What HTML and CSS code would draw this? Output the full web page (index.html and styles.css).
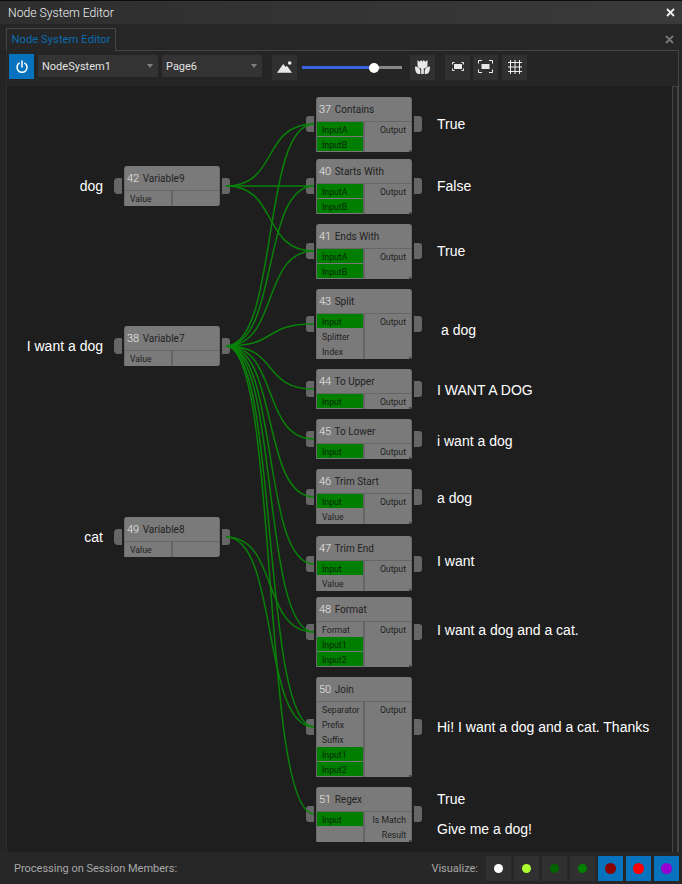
FILE: index.html
```html
<!DOCTYPE html>
<html lang="en">
<head>
<meta charset="utf-8">
<title>Node System Editor</title>
<link rel="stylesheet" href="styles.css">
</head>
<body>
<div class="window">
  <header class="titlebar">
    <span>Node System Editor</span>
    <svg class="close" viewBox="0 0 9 9"><path d="M1 1 8 8M8 1 1 8"/></svg>
  </header>
  <div class="tabstrip">
    <div class="tab">Node System Editor</div>
    <svg class="close dim" viewBox="0 0 9 9"><path d="M1 1 8 8M8 1 1 8"/></svg>
  </div>
  <div class="panel">
    <div class="toolbar">
      <button class="tool power"><svg viewBox="0 0 14 14"><path d="M4.2 3.2a5 5 0 1 0 5.6 0M7 1v6"/></svg></button>
      <div class="combo c1"><span>NodeSystem1</span><i></i></div>
      <div class="combo c2"><span>Page6</span><i></i></div>
      <button class="tool t-image"><svg viewBox="0 0 15 12"><circle cx="12.700" cy="2" r="1.800" class="fill"/><path class="fill" d="M0 11.700 6.200 3l2.400 3 1.300-1.200 5.100 6.900z"/></svg></button>
      <div class="slider"><div class="slider-fill"></div><div class="thumb"></div></div>
      <button class="tool t-flower"><svg viewBox="0 0 15 15"><path class="fill" d="M2.500 0l2.200 1.700L6.200 0l1.300 1.700L8.800 0l1.500 1.700L12.500 0v5.200c0 2-1.700 3-3.700 3.200V14H6.200V8.400c-2-.2-3.700-1.200-3.700-3.200zM0 6.600c2.800 0 5 1.800 5.300 4V14H3.500C1.200 14 0 11 0 6.600zM15 6.600c-2.800 0-5 1.800-5.300 4V14h1.800c2.300 0 3.500-3 3.500-7.400z"/></svg></button>
      <button class="tool t-fit"><svg viewBox="0 0 12 9"><path class="line" d="M.5 2.500V.5h2M9.500 .5h2v2M.5 6.500v2h2M9.500 8.500h2v-2"/><rect class="fill" x="2" y="2" width="8" height="5"/></svg></button>
      <button class="tool t-full"><svg viewBox="0 0 15 13"><path class="line" d="M.5 3.500V.5h3.500M11 .5h3.500v3M.5 9.500v3h3.500M11 12.500h3.500v-3"/><rect class="fill" x="3.500" y="4" width="8" height="5"/></svg></button>
      <button class="tool t-grid"><svg viewBox="0 0 14 14"><path class="line" d="M2.500 0v14M7 0v14M11.500 0v14M0 2.500h14M0 7h14M0 11.500h14"/></svg></button>
    </div>
    <div class="content">
      <main class="canvas">
        <div class="label left l-dog">dog</div>
        <div class="label left l-want">I want a dog</div>
        <div class="label left l-cat">cat</div>

        <div class="node var n42"><div class="port in p12"></div><div class="body"><div class="head"><b>42</b> Variable9</div><div class="rows"><div class="col"><div class="row">Value</div></div><div class="col r"></div></div></div><div class="port out p12"></div></div>
        <div class="node var n38"><div class="port in p12"></div><div class="body"><div class="head"><b>38</b> Variable7</div><div class="rows"><div class="col"><div class="row">Value</div></div><div class="col r"></div></div></div><div class="port out p12"></div></div>
        <div class="node var n49"><div class="port in p12"></div><div class="body"><div class="head"><b>49</b> Variable8</div><div class="rows"><div class="col"><div class="row">Value</div></div><div class="col r"></div></div></div><div class="port out p12"></div></div>

        <div class="node op n37"><div class="port in p19"></div><div class="body"><div class="head"><b>37</b> Contains</div><div class="rows"><div class="col"><div class="row on">InputA</div><div class="row on">InputB</div></div><div class="col r"><div class="row">Output</div></div></div></div><div class="port out p19"></div></div>
        <div class="node op n40"><div class="port in p19"></div><div class="body"><div class="head"><b>40</b> Starts With</div><div class="rows"><div class="col"><div class="row on">InputA</div><div class="row on">InputB</div></div><div class="col r"><div class="row">Output</div></div></div></div><div class="port out p19"></div></div>
        <div class="node op n41"><div class="port in p19"></div><div class="body"><div class="head"><b>41</b> Ends With</div><div class="rows"><div class="col"><div class="row on">InputA</div><div class="row on">InputB</div></div><div class="col r"><div class="row">Output</div></div></div></div><div class="port out p19"></div></div>
        <div class="node op n43"><div class="port in p27"></div><div class="body"><div class="head"><b>43</b> Split</div><div class="rows"><div class="col"><div class="row on">Input</div><div class="row">Splitter</div><div class="row">Index</div></div><div class="col r"><div class="row">Output</div></div></div></div><div class="port out p27"></div></div>
        <div class="node op n44"><div class="port in p12"></div><div class="body"><div class="head"><b>44</b> To Upper</div><div class="rows"><div class="col"><div class="row on">Input</div></div><div class="col r"><div class="row">Output</div></div></div></div><div class="port out p12"></div></div>
        <div class="node op n45"><div class="port in p12"></div><div class="body"><div class="head"><b>45</b> To Lower</div><div class="rows"><div class="col"><div class="row on">Input</div></div><div class="col r"><div class="row">Output</div></div></div></div><div class="port out p12"></div></div>
        <div class="node op n46"><div class="port in p20"></div><div class="body"><div class="head"><b>46</b> Trim Start</div><div class="rows"><div class="col"><div class="row on">Input</div><div class="row">Value</div></div><div class="col r"><div class="row">Output</div></div></div></div><div class="port out p20"></div></div>
        <div class="node op n47"><div class="port in p20"></div><div class="body"><div class="head"><b>47</b> Trim End</div><div class="rows"><div class="col"><div class="row on">Input</div><div class="row">Value</div></div><div class="col r"><div class="row">Output</div></div></div></div><div class="port out p20"></div></div>
        <div class="node op n48"><div class="port in p27"></div><div class="body"><div class="head"><b>48</b> Format</div><div class="rows"><div class="col"><div class="row">Format</div><div class="row on">Input1</div><div class="row on">Input2</div></div><div class="col r"><div class="row">Output</div></div></div></div><div class="port out p27"></div></div>
        <div class="node op n50"><div class="port in p42"></div><div class="body"><div class="head"><b>50</b> Join</div><div class="rows"><div class="col"><div class="row">Separator</div><div class="row">Prefix</div><div class="row">Suffix</div><div class="row on">Input1</div><div class="row on">Input2</div></div><div class="col r"><div class="row">Output</div></div></div></div><div class="port out p42"></div></div>
        <div class="node op n51"><div class="port in p19"></div><div class="body"><div class="head"><b>51</b> Regex</div><div class="rows"><div class="col"><div class="row on">Input</div></div><div class="col r"><div class="row">Is Match</div><div class="row">Result</div></div></div></div><div class="port out p19"></div></div>

        <svg class="wires" viewBox="7 86 665 766">
          <path d="M226 186C279 186 261 124 314 124"/>
          <path d="M226 186H314"/>
          <path d="M226 186C279 186 261 251 314 251"/>
          <path d="M226 346C279 346 261 124 314 124"/>
          <path d="M226 346C279 346 261 186 314 186"/>
          <path d="M226 346C279 346 261 251 314 251"/>
          <path d="M226 346C279 346 261 324 314 324"/>
          <path d="M226 346C279 346 261 389 314 389"/>
          <path d="M226 346C279 346 261 439 314 439"/>
          <path d="M226 346C279 346 261 497 314 497"/>
          <path d="M226 346C279 346 261 564 314 564"/>
          <path d="M226 346C279 346 261 632 314 632"/>
          <path d="M226 346C279 346 261 727 314 727"/>
          <path d="M226 346C279 346 261 814 314 814"/>
          <path d="M226 537C279 537 261 632 314 632"/>
          <path d="M226 537C279 537 261 727 314 727"/>
        </svg>

        <div class="label right v1">True</div>
        <div class="label right v2">False</div>
        <div class="label right v3">True</div>
        <div class="label right v4">a dog</div>
        <div class="label right v5">I WANT A DOG</div>
        <div class="label right v6">i want a dog</div>
        <div class="label right v7">a dog</div>
        <div class="label right v8">I want</div>
        <div class="label right v9">I want a dog and a cat.</div>
        <div class="label right v10">Hi! I want a dog and a cat. Thanks</div>
        <div class="label right v11">True</div>
        <div class="label right v12">Give me a dog!</div>
      </main>
      <div class="scrollbar"></div>
    </div>
  </div>
  <footer class="status">
    <span class="processing">Processing on Session Members:</span>
    <span class="visualize">Visualize:</span>
    <div class="vis-buttons">
      <button class="vis"><i class="dot white"></i></button>
      <button class="vis"><i class="dot lime"></i></button>
      <button class="vis"><i class="dot dgreen"></i></button>
      <button class="vis"><i class="dot green"></i></button>
      <button class="vis active"><i class="dot dred"></i></button>
      <button class="vis active"><i class="dot red"></i></button>
      <button class="vis active"><i class="dot violet"></i></button>
    </div>
  </footer>
</div>
</body>
</html>
```
FILE: styles.css
```css
* { box-sizing: border-box; }
html, body { margin: 0; padding: 0; background: #252525; }
body { font-family: "Roboto", "Liberation Sans", sans-serif; color: #ddd; }
button { border: 0; padding: 0; margin: 0; font: inherit; }
.window { width: 682px; height: 884px; display: flex; flex-direction: column; overflow: hidden; border-top: 1px solid #0c0c0c; }

.titlebar { height: 23px; flex: none; display: flex; align-items: center; justify-content: space-between; padding: 0 7px 0 8px; background: linear-gradient(90deg, #2e2e2e, #3a3a3a); font-size: 12.2px; font-weight: 300; color: #f0f0f0; }
.close { width: 9px; height: 9px; fill: none; stroke: #f2f2f2; stroke-width: 1.8; }
.close.dim { stroke: #777; margin-right: 3px; }

.tabstrip { height: 26px; flex: none; display: flex; align-items: flex-end; justify-content: space-between; padding-left: 6px; padding-right: 5px; background: #262626; }
.tabstrip .close { align-self: center; margin-top: 4px; }
.tab { width: 110px; height: 23px; border: 1px solid #454545; border-bottom: 0; color: #0a6cb0; font-size: 11.300px; line-height: 21px; text-align: center; background: #262626; position: relative; top: 1px; }

.panel { flex: 1; min-height: 0; display: flex; flex-direction: column; margin-right: 3px; margin-left: 6px; border-top: 1px solid #454545; border-right: 1px solid #454545; border-left: 1px solid #2d2d2d; }
.toolbar { height: 35px; flex: none; display: flex; align-items: flex-start; padding-left: 2px; }
.tool { width: 25px; height: 25px; margin-top: 4px; background: #303030; display: flex; align-items: center; justify-content: center; flex: none; }
.tool svg { display: block; margin-bottom: 2px; }
.line { fill: none; stroke: #f0f0f0; stroke-width: 1; }
.fill { fill: #e8e8e8; }
.power { background: #0772bd; margin-right: 4px; margin-top: 3px; }
.power svg { width: 14px; height: 14px; fill: none; stroke: #fff; stroke-width: 1.500; stroke-linecap: round; margin-bottom: 0; }
.combo { height: 22px; margin-top: 4px; background: #333; display: flex; align-items: center; justify-content: space-between; padding: 0 5px 0 4px; font-size: 11px; color: #e2e2e2; }
.combo i { width: 0; height: 0; border: 3.500px solid transparent; border-top: 4px solid #808080; border-bottom: 0; }
.c1 { width: 120px; margin-right: 4px; }
.c2 { width: 100px; margin-right: 10px; }
.t-image { margin-right: 5px; }
.t-image svg { width: 15px; height: 12px; margin-bottom: 1px; }
.slider { width: 100px; height: 3px; margin-top: 15px; background: #888; position: relative; margin-right: 8px; }
.slider-fill { width: 72px; height: 3px; background: #3a63e0; }
.thumb { position: absolute; left: 67px; top: -3px; width: 10px; height: 10px; border-radius: 50%; background: #fff; }
.t-flower { margin-right: 10px; }
.t-flower svg { width: 15px; height: 15px; margin-bottom: 1px; }
.t-fit { margin-right: 3px; }
.t-fit svg { width: 12px; height: 9px; }
.t-full { margin-right: 4px; }
.t-full svg { width: 15px; height: 13px; }
.t-grid svg { width: 14px; height: 14px; margin-bottom: 1px; }

.content { flex: 1; min-height: 0; display: flex; }
.canvas { width: 665px; height: 766px; background: #1e1e1e; position: relative; flex: none; overflow: hidden; }
.scrollbar { width: 6px; margin-bottom: 0; border: 1px solid #454545; background: #232323; flex: none; }

.wires { position: absolute; left: 0; top: 0; width: 665px; height: 766px; fill: none; stroke: #088308; stroke-width: 1.500; pointer-events: none; }

.node { position: absolute; display: flex; gap: 2px; align-items: flex-start; width: 116px; }
.var { left: 107px; }
.op { left: 299px; }
.port { width: 8px; height: 16px; background: #666; flex: none; }
.port.in { border-radius: 3px 0 0 3px; }
.port.out { border-radius: 0 3px 3px 0; }
.var .port.in { border-radius: 4px 1px 1px 4px; }
.p12 { margin-top: 12px; }
.p19 { margin-top: 19px; }
.p20 { margin-top: 20px; }
.p27 { margin-top: 27px; }
.p42 { margin-top: 42px; }

.body { width: 96px; position: relative; background: #7a7a7a; border: 1px solid #6a6a6a; border-top-color: #777; border-bottom: 0; border-radius: 3px 3px 2px 0; flex: none; color: #222; display: flex; flex-direction: column; }
.op .body::after { content: ""; position: absolute; right: 0; bottom: 0; width: 2px; height: 2px; background: #4a4a4a; }
.head { height: 23px; font-size: 10px; line-height: 23px; padding-left: 2px; white-space: nowrap; }
.head b { font-weight: 300; font-size: 11px; color: #ececec; margin-right: 1px; }
.rows { display: flex; border-top: 1px solid #666; flex: none; }
.col { width: 46px; flex: none; font-size: 8.700px; }
.col.r { width: 48px; border-left: 2px solid #666; }
.row { height: 15px; line-height: 16px; padding-left: 5px; border-bottom: 1px solid #7a7a7a; white-space: nowrap; }
.row.on { background: #007e00; background-clip: padding-box; color: #032603; }
.col.r .row { text-align: right; padding-right: 5px; padding-left: 0; }

.n42 { top: 80px; } .n38 { top: 240px; } .n49 { top: 431px; }
.n37 { top: 11px; } .n40 { top: 73px; } .n41 { top: 138px; }
.n43 { top: 203px; } .n44 { top: 283px; } .n45 { top: 333px; }
.n46 { top: 383px; } .n47 { top: 450px; } .n48 { top: 511px; }
.n50 { top: 591px; } .n51 { top: 701px; }
.var .body { border-radius: 3px 3px 3px 1px; }

.label { position: absolute; font-family: "Liberation Sans", Arial, sans-serif; font-size: 14px; line-height: 16px; color: #fff; white-space: nowrap; }
.label.left { left: 0; width: 96px; text-align: right; }
.label.right { left: 430px; }
.l-dog { top: 92px; } .l-want { top: 252px; } .l-cat { top: 443px; }
.v1 { top: 30px; } .v2 { top: 92px; } .v3 { top: 157px; } .v4 { top: 236px; }
.label.v4 { left: 434px; }
.v5 { top: 296px; } .v6 { top: 347px; } .v7 { top: 404px; } .v8 { top: 467px; }
.v9 { top: 536px; } .v10 { top: 633px; } .v11 { top: 705px; } .v12 { top: 735px; }

.status { height: 32px; flex: none; display: flex; align-items: center; background: #272727; padding-left: 14px; font-size: 11px; color: #a8a8a8; margin-top: -1px; }
.processing { flex: 1; }
.visualize { margin-right: 8px; }
.vis-buttons { display: flex; gap: 3px; padding-right: 3px; }
.vis { width: 25px; height: 25px; background: #303030; display: flex; align-items: center; justify-content: center; }
.vis.active { background: #0772bd; }
.dot { display: block; border-radius: 50%; width: 9px; height: 9px; }
.active .dot { width: 11px; height: 11px; }
.white { background: #fff; } .lime { background: #adff2f; } .dgreen { background: #006400; } .green { background: #008000; }
.dred { background: #8b0000; } .red { background: #f00; } .violet { background: #9400d3; }
```
